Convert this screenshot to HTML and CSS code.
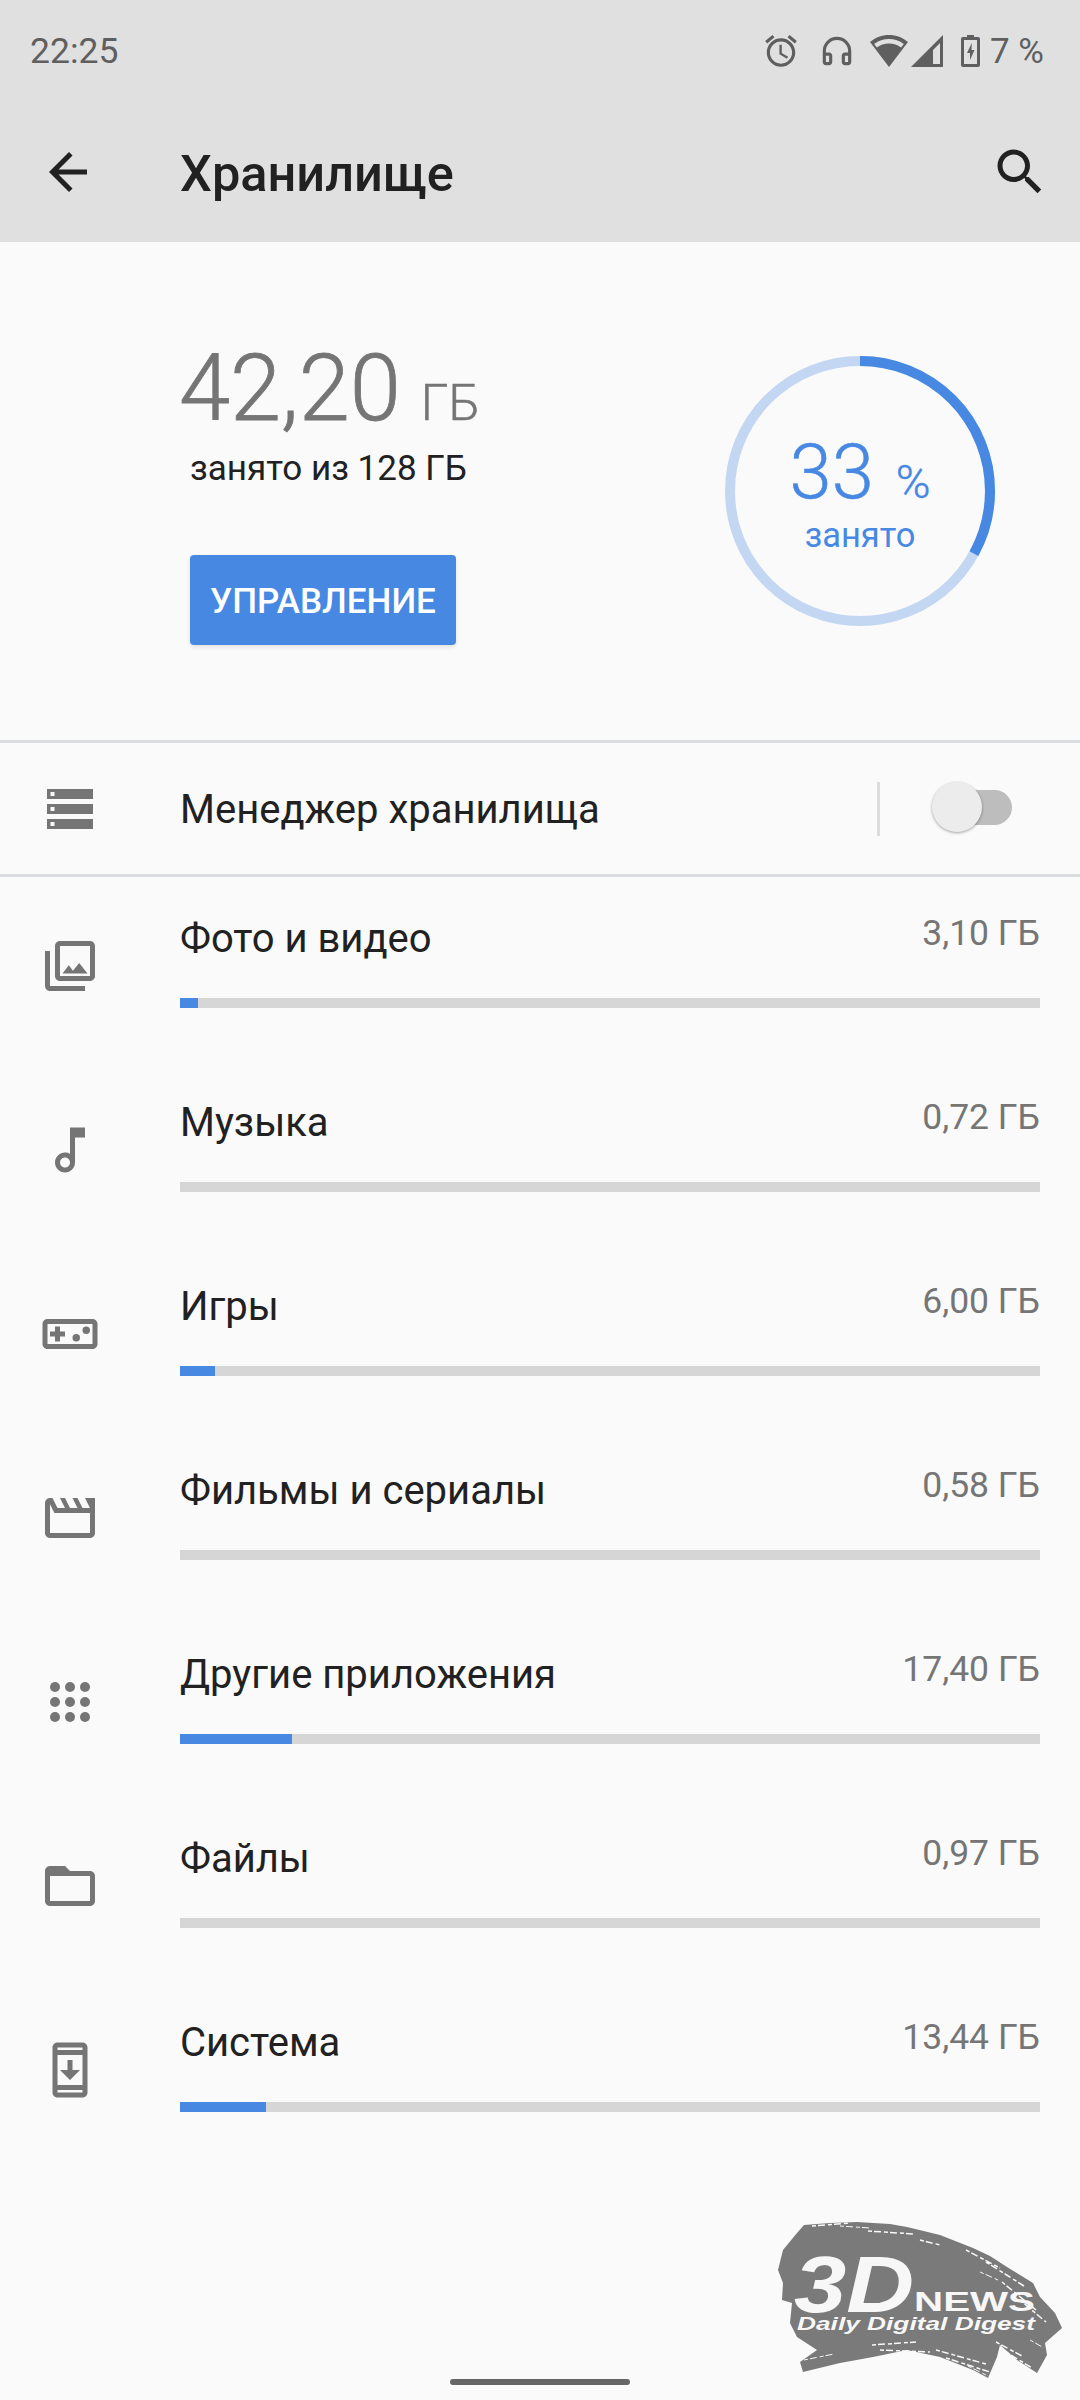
FILE: index.html

```html
<!DOCTYPE html>
<html lang="ru">
<head>
    <meta charset="UTF-8">
    <meta name="viewport" content="width=device-width, initial-scale=1.0">
    <title>Хранилище</title>
    <link rel="stylesheet" href="styles.css">
</head>
<body>
    <div class="screen">
        <header class="top">
            <div class="status-bar">
                <span class="clock">22:25</span>
                <div class="status-icons">
                    <svg class="st-alarm" viewBox="0 0 24 24"><path d="M22 5.72l-4.6-3.86-1.29 1.53 4.6 3.86L22 5.72zM7.88 3.39L6.6 1.86 2 5.71l1.29 1.53 4.59-3.85zM12.5 8H11v6l4.75 2.85.75-1.23-4-2.37V8zM12 4c-4.97 0-9 4.03-9 9s4.03 9 9 9 9-4.03 9-9-4.03-9-9-9zm0 16c-3.87 0-7-3.13-7-7s3.13-7 7-7 7 3.13 7 7-3.13 7-7 7z"/></svg>
                    <svg class="st-phones" viewBox="0 0 24 24"><path d="M12 3a9 9 0 0 0-9 9v7c0 1.1.9 2 2 2h2c1.1 0 2-.9 2-2v-4c0-1.1-.9-2-2-2H5v-1a7 7 0 0 1 14 0v1h-2c-1.1 0-2 .9-2 2v4c0 1.1.9 2 2 2h2c1.1 0 2-.9 2-2v-7a9 9 0 0 0-9-9zM7 15v4H5v-4h2zm12 0v4h-2v-4h2z"/></svg>
                    <svg class="st-wifi" viewBox="0 0 38 32"><path fill-rule="evenodd" d="M19 0C12 0 5.500 2.400 0 7l19 25L38 7C32.500 2.400 26 0 19 0zM19 4c5.500 0 10.500 1.800 14.800 4.900l-2.700 3.500C27.600 9.900 23.500 8.500 19 8.500S10.400 9.900 6.900 12.400L4.200 8.900C8.500 5.800 13.500 4 19 4z"/></svg>
                    <svg class="st-signal" viewBox="0 0 32 32"><path fill-rule="evenodd" d="M32 0L0 32h32V0zM29 8v21H22V15z"/></svg>
                    <svg class="st-battery" viewBox="0 0 19 32"><path fill-rule="evenodd" d="M6 0h7v2h4a2 2 0 0 1 2 2v26a2 2 0 0 1-2 2H2a2 2 0 0 1-2-2V4a2 2 0 0 1 2-2h4V0zM3 5v24h13V5H3zM10.800 8L6 18h3v7l4.500-10H10.500z"/></svg>
                    <span class="st-percent">7 %</span>
                </div>
            </div>
            <div class="app-bar">
                <svg class="ic-back" viewBox="0 0 24 24"><path d="M19.200 11H7.830l5.590-5.590L12 4l-8 8 8 8 1.410-1.410L7.830 13H19.200v-2z"/></svg>
                <h1 class="app-title">Хранилище</h1>
                <svg class="ic-search" viewBox="0 0 24 24"><path d="M15.500 14h-.79l-.28-.27C15.410 12.590 16 11.110 16 9.500 16 5.910 13.090 3 9.500 3S3 5.910 3 9.500 5.910 16 9.500 16c1.610 0 3.090-.59 4.230-1.570l.27.28v.79l5 4.990L20.490 19l-4.990-5zm-6 0C7.010 14 5 11.990 5 9.500S7.010 5 9.500 5 14 7.010 14 9.500 11.990 14 9.500 14z"/></svg>
            </div>
        </header>

        <section class="summary">
            <div class="summary-left">
                <div class="used"><span class="used-num">42,20</span> <span class="used-unit">ГБ</span></div>
                <div class="used-of">занято из 128 ГБ</div>
                <div class="manage-btn">УПРАВЛЕНИЕ</div>
            </div>
            <div class="ring">
                <svg class="ring-svg" viewBox="0 0 270 270">
                    <circle cx="135" cy="135" r="130" fill="none" stroke="#c3d7f3" stroke-width="10"/>
                    <circle cx="135" cy="135" r="130" fill="none" stroke="#4688e2" stroke-width="10" pathLength="100" stroke-dasharray="33 100" transform="rotate(-90 135 135)"/>
                </svg>
                <div class="ring-text">
                    <div class="ring-value"><span class="ring-num">33</span><span class="ring-pct">%</span></div>
                    <div class="ring-label">занято</div>
                </div>
            </div>
        </section>

        <div class="manager">
            <div class="row-icon">
                <svg viewBox="0 0 24 24"><path fill-rule="evenodd" d="M2.800 4h18.400v4H2.800zM4.200 5.200v1.600h1.600V5.200zM2.800 10h18.400v4H2.800zM4.200 11.200v1.600h1.600v-1.600zM2.800 16h18.400v4H2.800zM4.200 17.200v1.600h1.600v-1.600z"/></svg>
            </div>
            <div class="manager-title">Менеджер хранилища</div>
            <div class="manager-sep"></div>
            <div class="switch"><span class="switch-thumb"></span></div>
        </div>

        <div class="list" id="list"></div>

        <svg class="logo" viewBox="0 0 340 210">
            <path class="logo-brush" d="M64 35 L90 33 L117 32 L150 34 L167 37 L200 45 L233 58 L250 66 L267 77 L293 93 L300 107 L315 123 L322 138 L305 153 L307 165 L297 183 L277 170 L260 155 L257 167 L248 188 L233 180 L200 167 L167 160 L133 167 L100 173 L63 182 L60 172 L77 160 L57 147 L50 133 L52 113 L42 110 L43 93 L38 80 L43 60 L57 43 Z"/>
            <g class="logo-streaks">
                <path class="streak-wide" d="M72 36l38-3M128 41l46 3M180 50l20 5M226 60l34 18M246 72l38 24M262 92l34 28M280 110l26 22M132 155l44-3M140 160l50 2M196 160l50 14M206 168l44 14M256 152l26 14M266 162l26 16"/>
                <path d="M64 170l30-6M100 36l30 2M240 82l18 8M290 150l14 8M228 176l20 10"/>
            </g>
            <text class="logo-3d" x="54" y="122" textLength="120" lengthAdjust="spacingAndGlyphs">3D</text>
            <text class="logo-news" x="174" y="120.500" textLength="121" lengthAdjust="spacingAndGlyphs">NEWS</text>
            <text class="logo-tag" x="57" y="140" textLength="238" lengthAdjust="spacingAndGlyphs">Daily Digital Digest</text>
        </svg>

        <div class="nav-pill"></div>
    </div>

    <script>
        // file categories, size in GB and bar fill in percent of track
        const cats = [
            { name: "Фото и видео", size: "3,10 ГБ", fill: 2.1, icon: '<path d="M20 4v12H8V4h12m0-2H8c-1.100 0-2 .9-2 2v12c0 1.100.9 2 2 2h12c1.100 0 2-.9 2-2V4c0-1.100-.9-2-2-2zm-8.500 9.670l1.690 2.260 2.480-3.100L19 15H9zM2 6v14c0 1.100.9 2 2 2h14v-2H4V6H2z"/>' },
            { name: "Музыка", size: "0,72 ГБ", fill: 0, icon: '<path d="M12 3l.01 10.550c-.59-.34-1.270-.55-2-.55C7.790 13 6 14.790 6 17s1.790 4 4.010 4S14 19.210 14 17V7h4V3h-6zm-1.990 16c-1.100 0-2-.9-2-2s.9-2 2-2 2 .9 2 2-.9 2-2 2z"/>' },
            { name: "Игры", size: "6,00 ГБ", fill: 4.1, icon: '<path d="M21 6H3c-1.100 0-2 .9-2 2v8c0 1.100.9 2 2 2h18c1.100 0 2-.9 2-2V8c0-1.100-.9-2-2-2zm0 10H3V8h18v8zM6 15h2v-2h2v-2H8V9H6v2H4v2h2z"/><circle cx="14.500" cy="13.500" r="1.500"/><circle cx="18.500" cy="10.500" r="1.500"/>' },
            { name: "Фильмы и сериалы", size: "0,58 ГБ", fill: 0, icon: '<path d="M4 6.470L5.760 10H20v8H4V6.470M22 4h-4l2 4h-3l-2-4h-2l2 4h-3l-2-4H8l2 4H7L5 4H4c-1.100 0-1.990.9-1.990 2L2 18c0 1.100.9 2 2 2h16c1.100 0 2-.9 2-2V4z"/>' },
            { name: "Другие приложения", size: "17,40 ГБ", fill: 13, icon: '<circle cx="6" cy="6" r="2"/><circle cx="12" cy="6" r="2"/><circle cx="18" cy="6" r="2"/><circle cx="6" cy="12" r="2"/><circle cx="12" cy="12" r="2"/><circle cx="18" cy="12" r="2"/><circle cx="6" cy="18" r="2"/><circle cx="12" cy="18" r="2"/><circle cx="18" cy="18" r="2"/>' },
            { name: "Файлы", size: "0,97 ГБ", fill: 0, icon: '<path fill-rule="evenodd" d="M10 4H4c-1.100 0-2 .9-2 2v12c0 1.100.9 2 2 2h16c1.100 0 2-.9 2-2V8c0-1.100-.9-2-2-2h-8l-2-2zM4 8h16v10H4z"/>' },
            { name: "Система", size: "13,44 ГБ", fill: 10, icon: '<path d="M17 1.010L7 1c-1.100 0-2 .9-2 2v18c0 1.100.9 2 2 2h10c1.100 0 2-.9 2-2V3c0-1.100-.9-1.990-2-1.990zM17 21H7v-1h10v1zm0-3H7V6h10v12zm0-14H7V3h10v1zM16 12h-3V8h-2v4H8l4 4z"/>' }
        ];

        const list = document.getElementById("list");
        cats.forEach(c => {
            const row = document.createElement("div");
            row.className = "cat";
            row.innerHTML = `
                <div class="row-icon cat-icon"><svg viewBox="0 0 24 24">${c.icon}</svg></div>
                <div class="cat-body">
                    <div class="cat-head"><span class="cat-name">${c.name}</span><span class="cat-size">${c.size}</span></div>
                    <div class="bar"><div class="bar-fill" style="width: ${c.fill}%"></div></div>
                </div>`;
            list.appendChild(row);
        });
    </script>
</body>
</html>
```

FILE: styles.css

```css
* {
    margin: 0;
    padding: 0;
    box-sizing: border-box;
}
html, body {
    width: 1080px;
    height: 2400px;
    overflow: hidden;
}
body {
    background-color: #fafafa;
    font-family: Roboto, "Noto Sans", sans-serif;
    color: #212121;
}
.screen {
    position: relative;
    width: 1080px;
    height: 2400px;
}

/* top grey block */
.top {
    height: 242px;
    background-color: #e0e0e0;
}
.status-bar {
    display: flex;
    justify-content: space-between;
    align-items: center;
    height: 102px;
    padding: 0 36px 0 30px;
    color: #5f5f5f;
}
.clock {
    font-size: 35.500px;
}
.status-icons {
    display: flex;
    align-items: center;
}
.status-icons svg {
    display: block;
    fill: #5f5f5f;
}
.st-alarm {
    width: 38px;
    height: 38px;
    margin-right: 18px;
}
.st-phones {
    width: 38px;
    height: 38px;
    margin-right: 14px;
}
.st-wifi {
    width: 38px;
    height: 32px;
    margin-right: 3px;
}
.st-signal {
    width: 32px;
    height: 32px;
    margin-right: 18px;
}
.st-battery {
    width: 19px;
    height: 32px;
    margin-right: 10px;
}
.st-percent {
    font-size: 35px;
}
.app-bar {
    display: flex;
    align-items: center;
    height: 140px;
    padding: 0 30px 0 39px;
    color: #212121;
}
.app-bar svg {
    width: 60px;
    height: 60px;
    fill: #212121;
    flex-shrink: 0;
}
.app-title {
    flex: 1;
    margin-left: 81px;
    padding-top: 2px;
    font-size: 50.500px;
    font-weight: 500;
}

/* storage summary */
.summary {
    display: flex;
    justify-content: space-between;
    height: 498px;
    padding: 0 85px 0 180px;
}
.summary-left {
    padding-top: 93px;
}
.used {
    display: flex;
    align-items: baseline;
    gap: 20px;
    height: 104px;
    margin-left: -1px;
    color: #757575;
}
/* between light and regular, the reference sits there */
.used-num {
    font-size: 92px;
    font-weight: 300;
    -webkit-text-stroke: 0.8px #757575;
}
.used-unit {
    font-size: 50px;
    font-weight: 300;
    -webkit-text-stroke: 0.5px #757575;
}
.used-of {
    margin: 9px 0 0 10px;
    font-size: 35px;
}
.manage-btn {
    display: flex;
    align-items: center;
    justify-content: center;
    width: 266px;
    height: 90px;
    margin: 66px 0 0 10px;
    padding-top: 2px;
    background-color: #4688e2;
    border-radius: 4px;
    box-shadow: 0 2px 4px rgba(0, 0, 0, 0.1);
    color: #fff;
    font-size: 35px;
    font-weight: 500;
}
.ring {
    position: relative;
    width: 270px;
    height: 270px;
    margin-top: 114px;
}
.ring-svg {
    display: block;
    width: 270px;
    height: 270px;
}
.ring-text {
    position: absolute;
    inset: 0;
    display: flex;
    flex-direction: column;
    align-items: center;
    padding-top: 71px;
    color: #4688e2;
}
.ring-value {
    display: flex;
    align-items: baseline;
    gap: 22px;
    height: 88px;
    font-weight: 300;
    -webkit-text-stroke: 0.5px #4688e2;
}
.ring-num {
    font-size: 76px;
}
.ring-pct {
    font-size: 47px;
}
.ring-label {
    font-size: 34.500px;
}

/* storage manager row */
.manager {
    display: flex;
    align-items: center;
    height: 137px;
    border-top: 3px solid #dadce0;
    border-bottom: 3px solid #dadce0;
}
.row-icon {
    width: 180px;
    padding-left: 40px;
    flex-shrink: 0;
}
.row-icon svg {
    display: block;
    width: 60px;
    height: 60px;
    fill: #757575;
}
.manager-title {
    flex: 1;
    padding-top: 2px;
    font-size: 40px;
}
.manager-sep {
    width: 3px;
    height: 54px;
    background-color: #dadce0;
}
.switch {
    position: relative;
    width: 70px;
    height: 35px;
    margin: -2px 68px 0 62px;
    background-color: #bdbdbd;
    border-radius: 18px;
}
.switch-thumb {
    position: absolute;
    left: -10px;
    top: -8px;
    width: 50px;
    height: 50px;
    background-color: #ececec;
    border-radius: 50%;
    box-shadow: 0 1px 3px rgba(0, 0, 0, 0.35);
}

/* categories */
.cat {
    display: flex;
    height: 184px;
}
.cat-icon {
    padding-top: 59px;
}
.cat-body {
    flex: 1;
    padding: 33px 40px 0 0;
}
.cat-head {
    display: flex;
    justify-content: space-between;
    align-items: flex-start;
    height: 88px;
}
.cat-name {
    padding-top: 1px;
    font-size: 40px;
    line-height: 56px;
}
.cat-size {
    font-size: 35.500px;
    line-height: 46px;
    color: #757575;
}
.bar {
    height: 10px;
    background-color: #d6d6d6;
}
.bar-fill {
    height: 10px;
    background-color: #4688e2;
}

/* watermark over the page corner */
.logo {
    position: absolute;
    left: 740px;
    top: 2190px;
    width: 340px;
    height: 210px;
}
.logo-brush {
    fill: #7a7a7a;
}
.logo-streaks path {
    fill: none;
    stroke: #fafafa;
    stroke-width: 1;
    stroke-dasharray: 4 2 7 3;
}
.logo-streaks .streak-wide {
    stroke-width: 1.500;
}
.logo text {
    fill: #f7f7f7;
    font-family: "Liberation Sans", sans-serif;
    font-weight: bold;
}
.logo-3d {
    font-size: 80px;
    font-style: italic;
}
.logo-news {
    font-size: 28.500px;
}
.logo-tag {
    font-size: 18px;
    font-style: italic;
}

.nav-pill {
    position: absolute;
    left: 450px;
    top: 2379px;
    width: 180px;
    height: 6px;
    background-color: #666;
    border-radius: 3px;
}
```
